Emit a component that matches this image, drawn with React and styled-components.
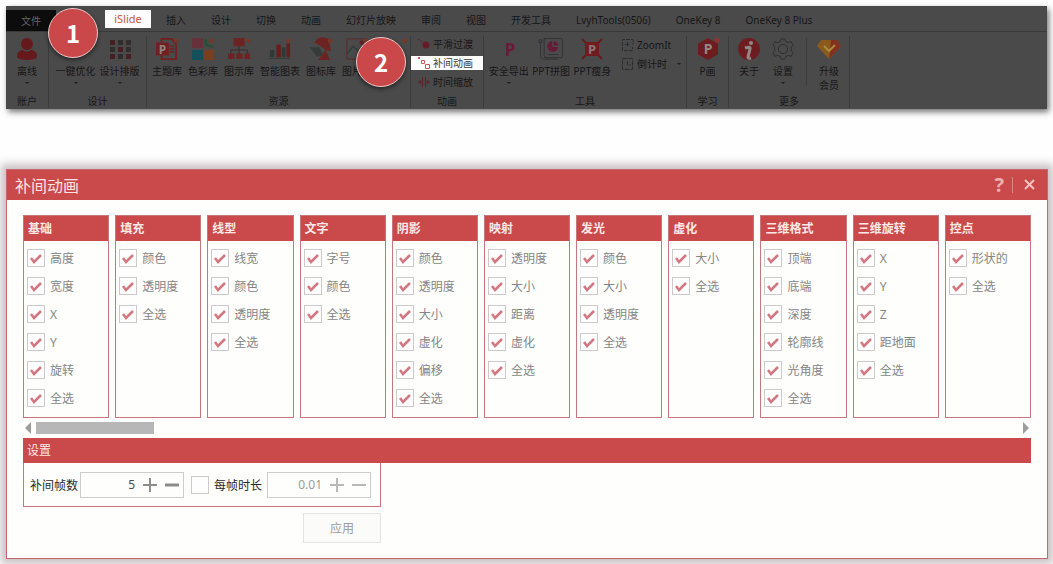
import { useState } from "react";
import styled, { createGlobalStyle, css } from "styled-components";

const GlobalStyle = createGlobalStyle`
  * {
    box-sizing: border-box;
  }
  body {
    margin: 0;
    background: #fefefe;
    font-family: "Noto Sans", "Noto Sans CJK SC", sans-serif;
    font-size: 12px;
  }
  button,
  input {
    margin: 0;
    padding: 0;
    border: 0;
    background: none;
    color: inherit;
    font: inherit;
  }
`;

const Page = styled.div`
  display: flex;
  flex-direction: column;
  gap: 60px;
  padding: 6px 5px 5px 6px;
`;

/* ribbon */

const Ribbon = styled.header`
  position: relative;
  margin-right: 1px;
  background: #4b4a4b;
  box-shadow: 2px 3px 6px rgba(0, 0, 0, 0.55);
  color: #161616;
  font-size: 10px;
  line-height: 14px;
`;
const TabBar = styled.nav`
  display: flex;
  align-items: flex-end;
  height: 26px;
  padding-top: 4px;
  border-bottom: 1px solid #3a393a;
`;
const FileTab = styled.button`
  width: 50px;
  height: 21px;
  background: #0c0c0c;
  color: #666;
`;
const ActiveTab = styled.button`
  width: 46px;
  height: 18px;
  margin: 0 15px 3px 49px;
  background: #fdfcfc;
  color: #c4573f;
  font-size: 11px;
`;
const TabList = styled.div`
  display: flex;
  gap: 25px;
  height: 21px;
  align-items: center;
  padding-bottom: 2px;
`;
const Tab = styled.button`
  white-space: nowrap;
`;
const Groups = styled.div`
  display: flex;
  padding: 4px 0 1px;
`;
const Group = styled.section`
  display: flex;
  flex-direction: column;
  justify-content: space-between;
  width: ${(p) => p.$width}px;
  height: 72px;
  border-right: 1px solid #3c3b3c;
`;
const Tools = styled.div`
  display: flex;
  justify-content: ${(p) => (p.$start ? "flex-start" : "center")};
  gap: ${(p) => p.$gap || 4}px;
  padding: 2px ${(p) => (p.$start ? 5 : 0)}px 0;
`;
const GroupName = styled.div`
  text-align: center;
`;
const Tool = styled.button`
  display: flex;
  flex-direction: column;
  align-items: center;
  min-width: 22px;
  white-space: nowrap;
  svg {
    height: 22px;
    margin-bottom: 4px;
    overflow: visible;
  }
`;
const Caret = styled.i`
  margin-top: 4px;
  border: 2px solid transparent;
  border-top-color: #1c1c1c;
  border-bottom: 0;
`;
const ShortLine = styled.span`
  width: 1px;
  height: 48px;
  background: #3c3b3c;
`;
const SmallTools = styled.div`
  display: flex;
  flex-direction: column;
  align-items: stretch;
  gap: 5px;
  padding-top: 1px;
`;
const SmallTool = styled.button`
  display: flex;
  align-items: center;
  gap: 3px;
  height: 14px;
  padding-left: 7px;
  white-space: nowrap;
  ${(p) =>
    p.$active &&
    css`
      background: #fdfcfc;
      color: #3a3a3a;
    `}
  ${Caret} {
    margin: 0 0 0 7px;
  }
`;
const ToolMenu = styled(SmallTools)`
  padding-top: 0;
`;
const Badge = styled.span`
  position: absolute;
  left: ${(p) => p.$x}px;
  top: ${(p) => p.$y}px;
  display: flex;
  align-items: center;
  justify-content: center;
  width: 50px;
  height: 50px;
  border: 1px solid #e9c9c9;
  border-radius: 50%;
  background: #ca4849;
  box-shadow: 0 2px 4px rgba(0, 0, 0, 0.5);
  color: #fff;
  font-family: "Noto Sans CJK SC", sans-serif;
  font-size: 24px;
  font-weight: 700;
`;

/* dialog */

const Dialog = styled.main`
  border: 1px solid #c4686d;
  background: #fefefd;
  box-shadow: 0 0 8px 5px rgba(90, 60, 70, 0.32);
`;
const TitleBar = styled.div`
  display: flex;
  align-items: center;
  height: 30px;
  padding: 0 10px 0 8px;
  background: #ca494b;
  color: #fbe3e1;
`;
const Title = styled.h1`
  flex: 1;
  margin: 0;
  font-size: 16px;
  font-weight: 400;
`;
const HelpButton = styled.button`
  padding-right: 8px;
  border-right: 1px solid #da8584;
  color: #eeb0ad;
  font-size: 20px;
  font-weight: 700;
  line-height: 16px;
`;
const CloseButton = styled.button`
  display: flex;
  padding-left: 10px;
`;
const Content = styled.div`
  padding: 15px 16px;
`;
const Columns = styled.div`
  display: grid;
  grid-template-columns: repeat(11, 1fr);
  gap: 6px;
`;
const Column = styled.fieldset`
  min-width: 0;
  margin: 0;
  padding: 0;
  border: 1px solid #c7777c;
`;
const SectionHeader = styled.div`
  height: 25px;
  padding-left: 4px;
  background: #ca494b;
  color: #fbe9e7;
  font-weight: ${(p) => (p.$bold ? 700 : 400)};
  line-height: 25px;
`;
const Options = styled.div`
  display: flex;
  flex-direction: column;
  gap: 10px;
  padding: 8px 3px 10px;
`;
const Option = styled.label`
  display: flex;
  align-items: center;
  gap: 5px;
  height: 18px;
  color: #858585;
  white-space: nowrap;
`;
const CheckBox = styled.span`
  display: grid;
  flex: none;
  width: 18px;
  height: 18px;
  input,
  svg {
    grid-area: 1 / 1;
  }
  input {
    appearance: none;
    width: 18px;
    height: 18px;
    border: 1px solid #cfcaca;
    background: #fefefe;
  }
  svg {
    z-index: 1;
    pointer-events: none;
  }
`;
const ScrollBar = styled.div`
  display: flex;
  align-items: center;
  height: 20px;
  padding: 0 2px;
`;
const Arrow = styled.button`
  border: 6px solid transparent;
  ${(p) =>
    p.$left
      ? css`
          border-left: 0;
          border-right-color: #9c9c9c;
        `
      : css`
          border-right: 0;
          border-left-color: #9c9c9c;
        `}
`;
const Track = styled.div`
  flex: 1;
  padding: 0 5px;
`;
const Thumb = styled.div`
  width: 12%;
  height: 12px;
  background: #b7b7b7;
`;
const SettingsRow = styled.div`
  display: flex;
  align-items: center;
  width: 358px;
  height: 44px;
  padding: 0 9px 0 6px;
  border: 1px solid #c7777c;
  border-top: 0;
`;
const FieldLabel = styled.label`
  color: #2a2a2a;
  white-space: nowrap;
`;
const Stepper = styled.div`
  display: flex;
  align-items: center;
  gap: 8px;
  width: 104px;
  height: 26px;
  margin: 0 7px 0 2px;
  padding-right: 4px;
  border: 1px solid #cdcdcd;
  color: ${(p) => (p.$off ? "#9a9a9a" : "#4a4a4a")};
  input {
    flex: 1;
    min-width: 0;
    text-align: right;
  }
  button {
    display: flex;
    color: ${(p) => (p.$off ? "#b9b9b9" : "#8c8c8c")};
  }
`;
const TickField = styled.div`
  display: flex;
  align-items: center;
  gap: 5px;
  margin-right: 3px;
`;
const ApplyButton = styled.button`
  display: block;
  width: 78px;
  height: 30px;
  margin: 6px 0 0 280px;
  border: 1px solid #e3e3e0;
  background: #fbfbf9;
  color: #9b9b9b;
`;

const Icon = ({ children, size = 22 }) => (
  <svg width={size} height={size} viewBox={`0 0 ${size} ${size}`} fill="none">
    {children}
  </svg>
);

const Dot = ({ x = 20 }) => <circle cx={x} cy="3" r="2.5" fill="#783726" />;

const Letter = styled.text`
  fill: ${(p) => p.$color};
  font-family: "Noto Sans", sans-serif;
  font-size: ${(p) => p.$size}px;
  font-weight: 700;
  text-anchor: middle;
`;

const icons = {
  user: (
    <Icon>
      <circle cx="11" cy="6" r="6" fill="#65191b" />
      <path d="M1 19c0-5 3-7 6-7 2 2 6 2 8 0 3 0 6 2 6 7-1 4-19 4-20 0z" fill="#65191b" />
    </Icon>
  ),
  optimize: (
    <Icon>
      <path d="M3 19 14 8" stroke="#65191b" strokeWidth="3" />
    </Icon>
  ),
  layout: (
    <Icon>
      {[0, 1, 2].map((r) =>
        [0, 1, 2].map((c) => (
          <rect
            key={`${r}${c}`}
            x={1 + c * 8}
            y={2 + r * 7}
            width="5"
            height="5"
            fill={(r + c) % 2 || (r === 0 && c === 2) ? "#332c2d" : "#471e21"}
          />
        ))
      )}
    </Icon>
  ),
  theme: (
    <Icon size={24}>
      <path d="M6 5V1h11l5 6v16H6v-4" stroke="#711f20" strokeWidth="2" />
      <path d="M15 9h5M15 12h5M15 15h5" stroke="#711f20" strokeWidth="1.5" />
      <rect y="5" width="14" height="14" fill="#711f20" />
      <Letter x="7" y="17" $size={13} $color="#8f8380">
        P
      </Letter>
      <Dot x={22} />
    </Icon>
  ),
  color: (
    <Icon size={24}>
      <path d="M0 0h12v11H0z" fill="#65323c" />
      <path d="M0 13h12v11H0z" fill="#12515c" />
      <path d="M13 13h11v11H13z" fill="#784021" />
      <path d="M15 1c-1 6 1 8 8 8" stroke="#2a4d35" strokeWidth="3" />
      <Dot x={21} />
    </Icon>
  ),
  chart: (
    <Icon size={24}>
      <path d="M6 0h12v9H6zM0 17h7v6H0zM9 17h7v6H9zM18 17h6v6h-6z" fill="#6b2422" />
      <path d="M12 9v8M3 17v-4h18v4" stroke="#3b2626" />
      <Dot x={22} />
    </Icon>
  ),
  bars: (
    <Icon size={24}>
      <path d="M1 13h5v8H1zM14 10h4v11h-4zM0 22h23v1H0z" fill="#303835" />
      <path d="M8 7h5v14H8zM19 6h4v15h-4z" fill="#651f1f" />
      <Dot x={21} />
    </Icon>
  ),
  shapes: (
    <Icon size={24}>
      <path d="M12 9 5 5A10 10 0 0 1 20 1l3 13-5 0z" fill="#6b2422" />
      <path d="M0 10h10l5 10H7z" fill="#343b38" />
      <path d="m17 13 5 11H9z" fill="#6b2422" />
      <Dot x={22} />
    </Icon>
  ),
  picture: (
    <Icon size={24}>
      <path d="M1 1h22v22H1z" stroke="#5e2424" />
      <path d="m1 17 7-8 8 8 4-4 3 4" stroke="#303b36" strokeWidth="1.5" />
      <circle cx="17" cy="5" r="2.5" fill="#5e2424" />
      <Dot x={22} />
    </Icon>
  ),
  video: (
    <Icon size={24}>
      <path d="M1 4h18v16H1z" stroke="#5e2424" />
      <Dot x={28} />
    </Icon>
  ),
  safe: (
    <Icon>
      <Letter x="12" y="18" $size={17} $color="#681a38">
        P
      </Letter>
    </Icon>
  ),
  puzzle: (
    <Icon size={24}>
      <path
        d="M4.5.5h18q2 0 2 2v17q0 2-2 2h-16q-2 0-2-2zM.5 6v14q0 3 3 3h16"
        stroke="#303033"
      />
      <path d="M-1 2h3v3h-3z" stroke="#303033" />
      <circle cx="14" cy="9" r="6" fill="#651b36" />
      <path d="M14 9V2M14 9h7" stroke="#4b4a4b" strokeWidth="1.5" />
      <path d="M9 18h11" stroke="#303033" />
    </Icon>
  ),
  slim: (
    <Icon>
      <path
        d="m1 1 4 4M21 1l-4 4M1 21l4-4M21 21l-4-4"
        stroke="#611d1f"
        strokeWidth="2"
      />
      <path d="M4 4h14v14H4z" fill="#711b1f" />
      <Letter x="11" y="16" $size={13} $color="#8a7776">
        P
      </Letter>
    </Icon>
  ),
  hexagon: (
    <Icon>
      <path
        d="m11 1 9 5v10l-9 5-9-5V6z"
        fill="#6d1d20"
        stroke="#6d1d20"
        strokeWidth="2"
        strokeLinejoin="round"
      />
      <Letter x="11" y="16" $size={14} $color="#958986">
        P
      </Letter>
      <circle cx="20" cy="2" r="2.5" fill="#8c3431" />
    </Icon>
  ),
  about: (
    <Icon>
      <circle cx="11" cy="11" r="11" fill="#6d1d20" />
      <circle cx="13" cy="5" r="2" fill="#938785" />
      <path d="M7 10q6-2 5 1l-2 8q0 2 3 1" stroke="#938785" strokeWidth="3" />
    </Icon>
  ),
  gear: (
    <Icon size={24}>
      <path
        d="m10 1-1 3-3 1-3-1-2 4 2 2v4l-2 2 2 4 3-1 3 1 1 3h4l1-3 3-1 3 1 2-4-2-2v-4l2-2-2-4-3 1-3-1-1-3z"
        stroke="#2b2b2d"
        strokeLinejoin="round"
      />
      <circle cx="12" cy="12" r="5" stroke="#2b2b2d" />
    </Icon>
  ),
  diamond: (
    <Icon>
      <path d="M3 2h16l4 6-12 13L-1 8z" fill="#8a5b1d" />
      <path d="M13 2h6l4 6-12 13z" fill="#84301f" />
      <path d="m6 8 5 5 6-6" stroke="#aa8a3c" strokeWidth="2" />
    </Icon>
  ),
  smooth: (
    <Icon size={12}>
      <path d="m0 1 5 4" stroke="#651b2a" strokeDasharray="2 1" />
      <circle cx="8" cy="7" r="3.5" fill="#651b2a" />
    </Icon>
  ),
  tween: (
    <Icon size={12}>
      <path d="M0 0h2v2H0z" fill="#cf5560" />
      <path d="M3.5 3.5h3v3h-3zM7.5 7.5h4v4h-4z" stroke="#cf5560" />
    </Icon>
  ),
  zoomTime: (
    <Icon size={12}>
      <path d="M4.5 1v10M7.5 1v10M0 6h4M8 6h4M2 4v4M10 4v4" stroke="#5d2029" />
    </Icon>
  ),
  zoomIt: (
    <Icon size={12}>
      <path d="M3 .5H.5v11h10V8M4 .5h7v5M3 5.5h5M5.5 3v5" stroke="#2c2c2e" strokeDasharray="4 1" />
    </Icon>
  ),
  timer: (
    <Icon size={12}>
      <path d="M.5.5h10v11H.5zM5.5 3v4H9" stroke="#2c2c2e" strokeDasharray="5 1" />
    </Icon>
  ),
};

const tabs = [
  "插入",
  "设计",
  "切换",
  "动画",
  "幻灯片放映",
  "审阅",
  "视图",
  "开发工具",
  "LvyhTools(0506)",
  "OneKey 8",
  "OneKey 8 Plus",
];

const resources = [
  ["主题库", "theme"],
  ["色彩库", "color"],
  ["图示库", "chart"],
  ["智能图表", "bars"],
  ["图标库", "shapes"],
  ["图片库", "picture"],
];

const columns = [
  ["基础", ["高度", "宽度", "X", "Y", "旋转", "全选"]],
  ["填充", ["颜色", "透明度", "全选"]],
  ["线型", ["线宽", "颜色", "透明度", "全选"]],
  ["文字", ["字号", "颜色", "全选"]],
  ["阴影", ["颜色", "透明度", "大小", "虚化", "偏移", "全选"]],
  ["映射", ["透明度", "大小", "距离", "虚化", "全选"]],
  ["发光", ["颜色", "大小", "透明度", "全选"]],
  ["虚化", ["大小", "全选"]],
  ["三维格式", ["顶端", "底端", "深度", "轮廓线", "光角度", "全选"]],
  ["三维旋转", ["X", "Y", "Z", "距地面", "全选"]],
  ["控点", ["形状的", "全选"]],
];

const RibbonTool = ({ name, icon, caret }) => (
  <Tool>
    {icons[icon]}
    {name}
    {caret && <Caret />}
  </Tool>
);

const Check = ({ id, initial }) => {
  const [checked, setChecked] = useState(initial);
  return (
    <CheckBox>
      <input
        id={id}
        type="checkbox"
        checked={checked}
        onChange={() => setChecked(!checked)}
      />
      {checked && (
        <Icon size={18}>
          <path d="m4 9 3 4 7-7" stroke="#d27880" strokeWidth="2.5" />
        </Icon>
      )}
    </CheckBox>
  );
};

const NumberField = ({ id, initial, step, off }) => {
  const [value, setValue] = useState(initial);
  const change = (by) =>
    setValue(String(Math.round((Number(value) + by) * 100) / 100));
  return (
    <Stepper $off={off}>
      <input
        id={id}
        value={value}
        disabled={off}
        onChange={(e) => setValue(e.target.value)}
      />
      <button disabled={off} onClick={() => change(step)} aria-label="+">
        <Icon size={14}>
          <path d="M0 7h14M7 0v14" stroke="currentColor" strokeWidth="2" />
        </Icon>
      </button>
      <button disabled={off} onClick={() => change(-step)} aria-label="-">
        <Icon size={14}>
          <path
            d="M0 7h14"
            stroke="currentColor"
            strokeWidth={off ? 2 : 3}
          />
        </Icon>
      </button>
    </Stepper>
  );
};

const App = () => {
  return (
    <Page>
      <GlobalStyle />
      <Ribbon>
        <TabBar>
          <FileTab>文件</FileTab>
          <ActiveTab>iSlide</ActiveTab>
          <TabList>
            {tabs.map((tab) => (
              <Tab key={tab}>{tab}</Tab>
            ))}
          </TabList>
        </TabBar>
        <Groups>
          <Group $width={43}>
            <Tools>
              <RibbonTool name="离线" icon="user" caret />
            </Tools>
            <GroupName>账户</GroupName>
          </Group>
          <Group $width={98}>
            <Tools>
              <RibbonTool name="一键优化" icon="optimize" caret />
              <RibbonTool name="设计排版" icon="layout" caret />
            </Tools>
            <GroupName>设计</GroupName>
          </Group>
          <Group $width={264}>
            <Tools $start $gap={6}>
              {resources.map(([name, icon]) => (
                <RibbonTool key={name} name={name} icon={icon} />
              ))}
              <RibbonTool icon="video" />
            </Tools>
            <GroupName>资源</GroupName>
          </Group>
          <Group $width={73}>
            <SmallTools>
              <SmallTool>{icons.smooth}平滑过渡</SmallTool>
              <SmallTool $active>{icons.tween}补间动画</SmallTool>
              <SmallTool>{icons.zoomTime}时间缩放</SmallTool>
            </SmallTools>
            <GroupName>动画</GroupName>
          </Group>
          <Group $width={203}>
            <Tools $start>
              <RibbonTool name="安全导出" icon="safe" caret />
              <RibbonTool name="PPT拼图" icon="puzzle" />
              <RibbonTool name="PPT瘦身" icon="slim" />
              <ToolMenu>
                <SmallTool>{icons.zoomIt}ZoomIt</SmallTool>
                <SmallTool>
                  {icons.timer}倒计时
                  <Caret />
                </SmallTool>
              </ToolMenu>
            </Tools>
            <GroupName>工具</GroupName>
          </Group>
          <Group $width={42}>
            <Tools>
              <RibbonTool name="P画" icon="hexagon" />
            </Tools>
            <GroupName>学习</GroupName>
          </Group>
          <Group $width={121}>
            <Tools $gap={11}>
              <RibbonTool name="关于" icon="about" />
              <RibbonTool name="设置" icon="gear" caret />
              <ShortLine />
              <RibbonTool
                name={
                  <>
                    升级
                    <br />
                    会员
                  </>
                }
                icon="diamond"
              />
            </Tools>
            <GroupName>更多</GroupName>
          </Group>
        </Groups>
        <Badge $x={42} $y={2}>
          1
        </Badge>
        <Badge $x={350} $y={31}>
          2
        </Badge>
      </Ribbon>
      <Dialog>
        <TitleBar>
          <Title>补间动画</Title>
          <HelpButton>?</HelpButton>
          <CloseButton aria-label="关闭">
            <Icon size={14}>
              <path d="m2 2 9 9M11 2l-9 9" stroke="#f4c4c0" strokeWidth="2" />
            </Icon>
          </CloseButton>
        </TitleBar>
        <Content>
          <Columns>
            {columns.map(([name, options], i) => (
              <Column key={name} aria-label={name}>
                <SectionHeader $bold>{name}</SectionHeader>
                <Options>
                  {options.map((option, j) => (
                    <Option key={option} htmlFor={`option-${i}-${j}`}>
                      <Check id={`option-${i}-${j}`} initial />
                      {option}
                    </Option>
                  ))}
                </Options>
              </Column>
            ))}
          </Columns>
          <ScrollBar>
            <Arrow $left aria-label="向左" />
            <Track>
              <Thumb />
            </Track>
            <Arrow aria-label="向右" />
          </ScrollBar>
          <SectionHeader>设置</SectionHeader>
          <SettingsRow>
            <FieldLabel htmlFor="frames">补间帧数</FieldLabel>
            <NumberField id="frames" initial="5" step={1} />
            <TickField>
              <Check id="use-duration" initial={false} />
              <FieldLabel htmlFor="use-duration">每帧时长</FieldLabel>
            </TickField>
            <NumberField id="duration" initial="0.01" step={0.01} off />
          </SettingsRow>
          <ApplyButton>应用</ApplyButton>
        </Content>
      </Dialog>
    </Page>
  );
};
export default App;
